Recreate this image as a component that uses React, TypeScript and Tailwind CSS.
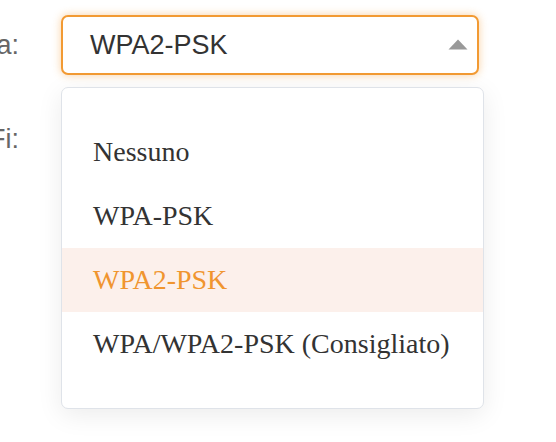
import { useState } from 'react'

const options = ['Nessuno', 'WPA-PSK', 'WPA2-PSK', 'WPA/WPA2-PSK (Consigliato)']

export default function App() {
    const [selected, setSelected] = useState<string>('WPA2-PSK')

    return (
        <div className="relative w-[556px] h-[442px] overflow-hidden bg-white font-['Liberation_Sans',Arial,sans-serif]">
            <div className="flex items-center mt-[15px] h-[60px]">
                {/* label column is cut off by the crop, keep the full text */}
                <div className="w-[19px] flex justify-end overflow-hidden whitespace-nowrap text-[27px] leading-[32px] text-[#666]">
                    Sicurezza:
                </div>
                <div className="relative ml-[42px] w-[418px] h-[60px]">
                    <div className="flex items-center h-full pl-[27px] pr-[9px] border-2 border-[#f29a33] rounded-[7px] bg-white shadow-[0_0_9px_rgba(242,154,51,0.45)]">
                        <span className="flex-1 text-[27px] leading-[32px] text-[#333]">{selected}</span>
                        <svg width="20" height="11" viewBox="0 0 20 11" className="mb-[1px]">
                            <path d="M10 0.5 L19.5 10.5 L0.5 10.5 Z" fill="#999" />
                        </svg>
                    </div>
                    <ul className="absolute left-0 top-[72px] w-[423px] py-[32px] bg-white border border-[#dfe3e9] rounded-[7px] shadow-[0_6px_26px_rgba(0,0,0,0.08)] font-['Liberation_Serif','Times_New_Roman',serif] text-[28px] leading-[64px]">
                        {options.map((opt) => (
                            <li
                                key={opt}
                                onClick={() => setSelected(opt)}
                                className={`h-[64px] pl-[31px] whitespace-nowrap ${opt === selected ? 'bg-[#fcf0eb] text-[#f0952f]' : 'text-[#333]'}`}
                            >
                                {opt}
                            </li>
                        ))}
                    </ul>
                </div>
            </div>
            <div className="mt-[48px] w-[19px] flex justify-end overflow-hidden whitespace-nowrap text-[27px] leading-[32px] text-[#666]">
                Password Wi-Fi:
            </div>
        </div>
    )
}
